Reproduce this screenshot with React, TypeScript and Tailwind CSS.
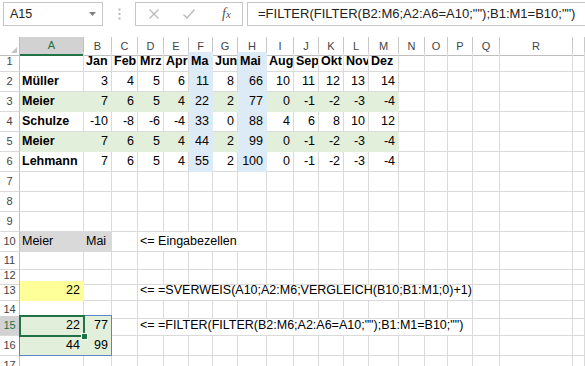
import React from "react";

type Cell = {
  t?: string;
  num?: boolean;
  bold?: boolean;
  fill?: string;
  span?: number;
};

type Row = { n: number; h: string; cells: Cell[]; active?: boolean };

const GRID =
  "grid grid-cols-[20px_64px_28px_26px_26px_25px_24px_25px_29px_27px_25px_25px_25px_30px_26px_23px_25px_27px_73px_1fr]";

const GREEN = "bg-[#e2efda] border-[#e2efda]";
const BLUE = "bg-[#ddebf7] border-[#ddebf7]";
const GREY = "bg-[#d9d9d9] border-[#d9d9d9]";
const YELLOW = "bg-[#ffff99] border-[#ffff99]";

const SPANS: Record<number, string> = {
  5: "col-span-5",
  13: "col-span-13",
};

const LETTERS = ["A", "B", "C", "D", "E", "F", "G", "H", "I", "J", "K", "L", "M", "N", "O", "P", "Q", "R", ""];

const months = ["Jan", "Feb", "Mrz", "Apr", "Ma", "Jun", "Mai", "Aug", "Sep", "Okt", "Nov", "Dez"];

function dataRow(name: string, nums: number[], green: boolean): Cell[] {
  return [
    { t: name, bold: true, fill: green ? GREEN : undefined },
    ...nums.map((v, i) => ({
      t: String(v),
      num: true,
      fill: i === 4 || i === 6 ? BLUE : green ? GREEN : undefined,
    })),
  ];
}

// fill up to A..R plus the trailing column
function pad(cells: Cell[]): Cell[] {
  const used = cells.reduce((s, c) => s + (c.span ?? 1), 0);
  return [...cells, ...Array.from({ length: 19 - used }, () => ({}))];
}

const rows: Row[] = [
  {
    n: 1,
    h: "h-[20px]",
    cells: [{}, ...months.map((m, i) => ({ t: m, bold: true, fill: i === 4 || i === 6 ? BLUE : undefined }))],
  },
  { n: 2, h: "h-[20px]", cells: dataRow("Müller", [3, 4, 5, 6, 11, 8, 66, 10, 11, 12, 13, 14], false) },
  { n: 3, h: "h-[20px]", cells: dataRow("Meier", [7, 6, 5, 4, 22, 2, 77, 0, -1, -2, -3, -4], true) },
  { n: 4, h: "h-[20px]", cells: dataRow("Schulze", [-10, -8, -6, -4, 33, 0, 88, 4, 6, 8, 10, 12], false) },
  { n: 5, h: "h-[20px]", cells: dataRow("Meier", [7, 6, 5, 4, 44, 2, 99, 0, -1, -2, -3, -4], true) },
  { n: 6, h: "h-[20px]", cells: dataRow("Lehmann", [7, 6, 5, 4, 55, 2, 100, 0, -1, -2, -3, -4], false) },
  { n: 7, h: "h-[20px]", cells: [] },
  { n: 8, h: "h-[20px]", cells: [] },
  { n: 9, h: "h-[20px]", cells: [] },
  {
    n: 10,
    h: "h-[20px]",
    cells: [{ t: "Meier", fill: GREY }, { t: "Mai", fill: GREY }, {}, { t: "<= Eingabezellen", span: 5 }],
  },
  { n: 11, h: "h-[15px]", cells: [] },
  { n: 12, h: "h-[14px]", cells: [] },
  {
    n: 13,
    h: "h-[20px]",
    cells: [{ t: "22", num: true, fill: YELLOW }, {}, {}, { t: "<= =SVERWEIS(A10;A2:M6;VERGLEICH(B10;B1:M1;0)+1)", span: 13 }],
  },
  { n: 14, h: "h-[15px]", cells: [] },
  {
    n: 15,
    h: "h-[20px]",
    active: true,
    cells: [
      { t: "22", num: true, fill: GREEN },
      { t: "77", num: true, fill: GREEN },
      {},
      { t: '<= =FILTER(FILTER(B2:M6;A2:A6=A10;"");B1:M1=B10;"")', span: 13 },
    ],
  },
  {
    n: 16,
    h: "h-[20px]",
    cells: [
      { t: "44", num: true, fill: GREEN },
      { t: "99", num: true, fill: GREEN },
    ],
  },
  { n: 17, h: "h-[20px]", cells: [] },
];

function SheetCell({ c }: { c: Cell }) {
  const align = c.num ? "justify-end pr-[3px]" : "justify-start pl-[2px]";
  return (
    <div
      className={`${c.span ? SPANS[c.span] : ""} ${c.fill ?? "border-[#dadada]"} border-r border-b flex items-end pb-[2px] leading-[15px] whitespace-nowrap ${
        c.span ? "overflow-visible" : "overflow-hidden"
      } ${align} ${c.bold ? "font-bold" : ""}`}
    >
      {c.t}
    </div>
  );
}

function FormulaBar() {
  return (
    <div className="h-[37px] flex items-start pt-[2px] bg-white">
      <div className="ml-[3px] w-[100px] h-[24px] border border-[#c6c6c6] flex items-center justify-between pl-[6px] pr-[6px]">
        <span className="text-[12.5px] text-[#222]">A15</span>
        <svg width="7" height="4" viewBox="0 0 7 4">
          <path d="M0 0h7L3.5 4z" fill="#808080" />
        </svg>
      </div>
      <div className="w-[32px] h-[24px] flex items-center justify-center">
        <svg width="3" height="12" viewBox="0 0 3 12">
          <rect x="0.5" y="0.5" width="2" height="2" fill="#b5b5b5" />
          <rect x="0.5" y="5" width="2" height="2" fill="#b5b5b5" />
          <rect x="0.5" y="9.5" width="2" height="2" fill="#b5b5b5" />
        </svg>
      </div>
      <div className="w-[108px] h-[24px] border border-[#c6c6c6] flex items-center">
        <svg className="ml-[13px]" width="10" height="10" viewBox="0 0 10 10">
          <path d="M0.5 0.5l9 9M9.5 0.5l-9 9" stroke="#b8b8b8" strokeWidth="1.2" />
        </svg>
        <svg className="ml-[24px]" width="12" height="10" viewBox="0 0 12 10">
          <path d="M0.5 5.5l3.5 3.5 7.5-8.5" stroke="#b8b8b8" strokeWidth="1.3" fill="none" />
        </svg>
        <span className="ml-[27px] font-['Liberation_Serif',serif] italic text-[14px] text-[#555] leading-none">
          f<span className="text-[11px]">x</span>
        </span>
      </div>
      <div className="ml-[4px] flex-1 h-[24px] border border-r-0 border-[#c6c6c6] flex items-center pl-[10px] text-[13px] text-[#222] whitespace-nowrap overflow-hidden">
        =FILTER(FILTER(B2:M6;A2:A6=A10;"");B1:M1=B10;"")
      </div>
    </div>
  );
}

export default function App() {
  return (
    <div className="w-[585px] h-[366px] overflow-hidden bg-white font-['Liberation_Sans',Arial,sans-serif] text-black">
      <FormulaBar />
      <div className="relative">
        {/* column headers */}
        <div className={`${GRID} h-[15px] text-[11px] text-[#444]`}>
          <div className="relative border-r border-b border-[#bfbfbf]">
            <svg className="absolute right-[2px] bottom-[2px]" width="6" height="6" viewBox="0 0 6 6">
              <path d="M6 0V6H0z" fill="#c4c4c4" />
            </svg>
          </div>
          {LETTERS.map((l, i) =>
            i === 0 ? (
              <div
                key={i}
                className="flex items-center justify-center bg-[#d2d2d2] text-[#217346] border-r border-[#bfbfbf] border-b-2 border-b-[#217346]"
              >
                {l}
              </div>
            ) : (
              <div key={i} className="flex items-center justify-center border-r border-b border-[#c8c8c8] border-b-[#bfbfbf]">
                {l}
              </div>
            )
          )}
        </div>

        {rows.map((r) => (
          <div key={r.n} className={`${GRID} ${r.h} text-[12.5px]`}>
            <div
              className={`flex items-center justify-center text-[11px] border-r border-b border-r-[#bfbfbf] border-b-[#dadada] ${
                r.active ? "bg-[#d2d2d2] text-[#217346]" : "text-[#444]"
              }`}
            >
              {r.n}
            </div>
            {pad(r.cells).map((c, i) => (
              <SheetCell key={i} c={c} />
            ))}
          </div>
        ))}

        {/* spill range and active cell */}
        <div className="absolute left-[19px] top-[278px] w-[93px] h-[41px] border border-[#5a86c4]" />
        <div className="absolute left-[19px] top-[278px] w-[66px] h-[22px] border-2 border-[#217346]" />
        <div className="absolute left-[81px] top-[296px] w-[7px] h-[7px] bg-[#217346] border border-white" />
      </div>
    </div>
  );
}
